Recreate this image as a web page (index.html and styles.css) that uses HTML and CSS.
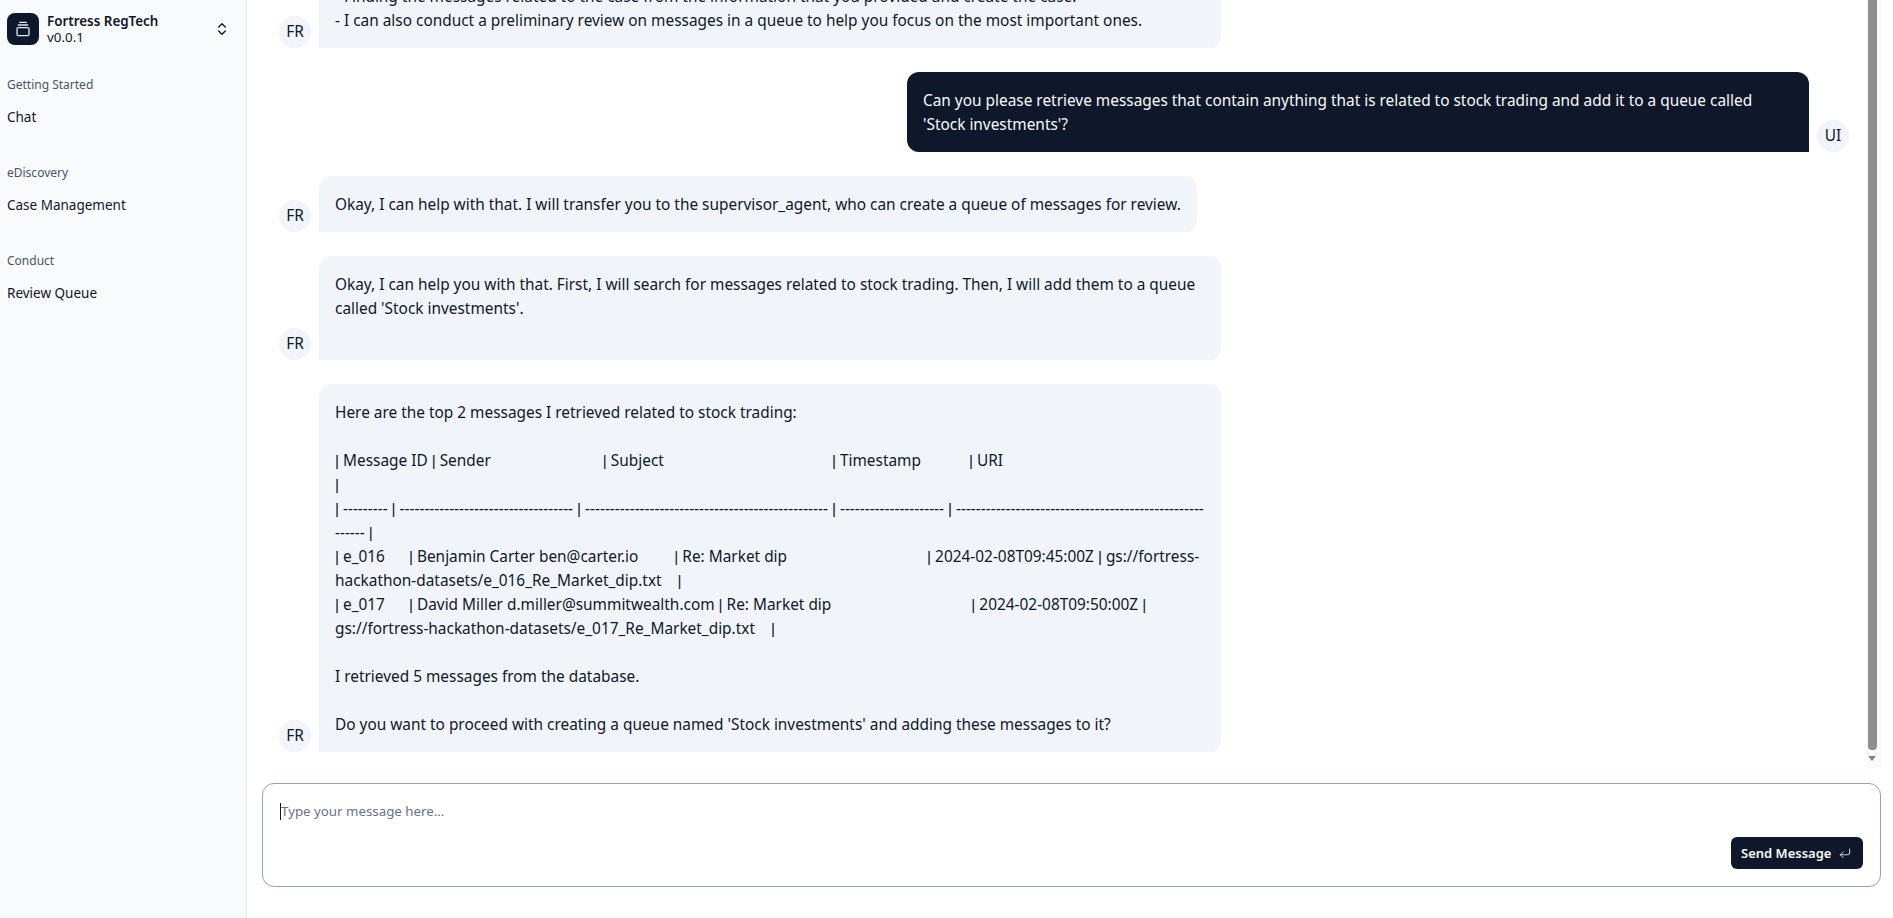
FILE: index.html
```html
<!DOCTYPE html>
<html lang="en">

<head>
    <meta charset="UTF-8">
    <title>Fortress RegTech</title>
    <link rel="stylesheet" href="styles.css">
</head>

<body>
    <div class="sidebar">
        <div class="brand">
            <div class="logo">
                <svg width="16" height="16" viewBox="0 0 24 24" fill="none" stroke="#e2e8f0" stroke-width="2" stroke-linecap="round" stroke-linejoin="round">
                    <path d="M7 2h10"></path>
                    <path d="M5 6h14"></path>
                    <rect x="3" y="10" width="18" height="12" rx="2"></rect>
                </svg>
            </div>
            <div class="brand-text">
                <b>Fortress RegTech</b>
                <span>v0.0.1</span>
            </div>
            <svg class="updown" width="16" height="16" viewBox="0 0 24 24" fill="none" stroke="#0f172a" stroke-width="2" stroke-linecap="round" stroke-linejoin="round">
                <path d="m7 15 5 5 5-5"></path>
                <path d="m7 9 5-5 5 5"></path>
            </svg>
        </div>
        <div class="group">
            <div class="group-label">Getting Started</div>
            <a class="nav" href="#">Chat</a>
        </div>
        <div class="group">
            <div class="group-label">eDiscovery</div>
            <a class="nav" href="#">Case Management</a>
        </div>
        <div class="group">
            <div class="group-label">Conduct</div>
            <a class="nav" href="#">Review Queue</a>
        </div>
    </div>

    <div class="main">
        <div class="messages">
            <div class="row">
                <div class="avatar">FR</div>
                <div class="bubble wide">
                    <div class="line">- Finding the messages related to the case from the information that you provided and create the case.</div>
                    <div class="line">- I can also conduct a preliminary review on messages in a queue to help you focus on the most important ones.</div>
                </div>
            </div>
            <div class="row mine">
                <div class="bubble">
                    <div class="line">Can you please retrieve messages that contain anything that is related to stock trading and add it to a queue called</div>
                    <div class="line">'Stock investments'?</div>
                </div>
                <div class="avatar">UI</div>
            </div>
            <div class="row">
                <div class="avatar">FR</div>
                <div class="bubble">
                    <div class="line">Okay, I can help with that. I will transfer you to the supervisor_agent, who can create a queue of messages for review.</div>
                </div>
            </div>
            <div class="row">
                <div class="avatar">FR</div>
                <div class="bubble wide">
                    <div class="line">Okay, I can help you with that. First, I will search for messages related to stock trading. Then, I will add them to a queue</div>
                    <div class="line">called 'Stock investments'.</div>
                    <div class="line"></div>
                </div>
            </div>
            <div class="row">
                <div class="avatar">FR</div>
                <div class="bubble wide">
                    <div class="line">Here are the top 2 messages I retrieved related to stock trading:</div>
                    <div class="line"></div>
                    <div class="line"><i class="pipe">|</i> Message ID <i class="pipe">|</i> Sender                            <i class="pipe">|</i> Subject                                          <i class="pipe">|</i> Timestamp            <i class="pipe">|</i> URI</div>
                    <div class="line"><i class="pipe">|</i></div>
                    <div class="line"><i class="pipe">|</i> --------- <i class="pipe">|</i> ----------------------------------- <i class="pipe">|</i> ------------------------------------------------- <i class="pipe">|</i> --------------------- <i class="pipe">|</i> --------------------------------------------------</div>
                    <div class="line">------ <i class="pipe">|</i></div>
                    <div class="line"><i class="pipe">|</i> e_016      <i class="pipe">|</i> Benjamin Carter ben@carter.io         <i class="pipe">|</i> Re: Market dip                                   <i class="pipe">|</i> 2024-02-08T09:45:00Z <i class="pipe">|</i> gs://fortress-</div>
                    <div class="line">hackathon-datasets/e_016_Re_Market_dip.txt    <i class="pipe">|</i></div>
                    <div class="line"><i class="pipe">|</i> e_017      <i class="pipe">|</i> David Miller d.miller@summitwealth.com <i class="pipe">|</i> Re: Market dip                                   <i class="pipe">|</i> 2024-02-08T09:50:00Z <i class="pipe">|</i></div>
                    <div class="line">gs://fortress-hackathon-datasets/e_017_Re_Market_dip.txt    <i class="pipe">|</i></div>
                    <div class="line"></div>
                    <div class="line">I retrieved 5 messages from the database.</div>
                    <div class="line"></div>
                    <div class="line">Do you want to proceed with creating a queue named 'Stock investments' and adding these messages to it?</div>
                </div>
            </div>
        </div>
        <div class="scrollbar">
            <div class="thumb"></div>
            <div class="arrow"></div>
        </div>
        <div class="composer">
            <div class="placeholder"><i class="caret"></i>Type your message here...</div>
            <button class="send">Send Message
                <svg width="14" height="14" viewBox="0 0 24 24" fill="none" stroke="#e2e8f0" stroke-width="1.5" stroke-linecap="round" stroke-linejoin="round">
                    <path d="M20 5v7a3 3 0 0 1-3 3H4"></path>
                    <path d="m9 10-5 5 5 5"></path>
                </svg>
            </button>
        </div>
    </div>
</body>

</html>
```

FILE: styles.css
```css
* {
    margin: 0;
    padding: 0;
    box-sizing: border-box;
}

body {
    display: flex;
    height: 918px;
    overflow: hidden;
    background-color: #fff;
    color: #0f172a;
    font-family: "Noto Sans", sans-serif;
    font-size: 15.4px;
    line-height: 24px;
}

.sidebar {
    width: 247px;
    flex-shrink: 0;
    padding: 13px 7px;
    background-color: #f8fafc;
    border-right: 1px solid #e2e8f0;
}

.brand {
    display: flex;
    align-items: center;
    height: 32px;
    margin-bottom: 24px;
}

.logo {
    width: 32px;
    height: 32px;
    display: flex;
    align-items: center;
    justify-content: center;
    border-radius: 8px;
    background-color: #0f172a;
}

.brand-text {
    flex: 1;
    margin-left: 8px;
    display: flex;
    flex-direction: column;
    font-size: 13.4px;
    line-height: 16px;
}

.brand-text b {
    font-weight: 600;
}

.updown {
    margin-right: 9px;
}

.group {
    height: 88px;
}

.group-label {
    height: 32px;
    line-height: 32px;
    font-size: 12px;
    color: #475569;
}

.nav {
    display: block;
    padding-top: 6px;
    font-size: 13.5px;
    line-height: 20px;
    color: #0f172a;
    text-decoration: none;
}

.main {
    flex: 1;
    position: relative;
    display: flex;
    flex-direction: column;
}

.messages {
    height: 752px;
    overflow: hidden;
    display: flex;
    flex-direction: column;
    justify-content: flex-end;
    gap: 24px;
    padding: 0 44px 0 32px;
}

.row {
    display: flex;
    align-items: flex-end;
    gap: 8px;
}

.row.mine {
    justify-content: flex-end;
}

.avatar {
    width: 32px;
    height: 32px;
    flex-shrink: 0;
    display: flex;
    align-items: center;
    justify-content: center;
    border-radius: 50%;
    background-color: #f1f5f9;
}

.bubble {
    max-width: 902px;
    padding: 17px 16px 15px;
    border-radius: 12px 12px 12px 0;
    background-color: #f1f5f9;
}

.bubble.wide {
    width: 902px;
}

.line {
    min-height: 24px;
    white-space: pre;
}

/* noto's bar is twice as wide as the one in the screenshot */
.pipe {
    font-family: "Liberation Sans", sans-serif;
    font-style: normal;
}

.mine .bubble {
    width: 902px;
    border-radius: 12px 12px 0 12px;
    background-color: #0f172a;
    color: #f8fafc;
}

/* drawn by hand, headless chrome hides the real one */
.scrollbar {
    position: absolute;
    top: 0;
    right: 12px;
    width: 15px;
    height: 768px;
    background-color: #fafafa;
}

.thumb {
    width: 9px;
    height: 750px;
    margin-left: 2px;
    border-radius: 0 0 4px 4px;
    background-color: #8f8f8f;
}

.arrow {
    width: 0;
    height: 0;
    margin: 6px 0 0 2px;
    border-left: 4.5px solid transparent;
    border-right: 4.5px solid transparent;
    border-top: 5px solid #808080;
}

.composer {
    height: 104px;
    margin: 31px 12px 0 15px;
    padding: 17px;
    display: flex;
    flex-direction: column;
    border: 1px solid #94a3b8;
    border-radius: 12px;
}

.placeholder {
    flex: 1;
    color: #64748b;
    font-size: 13.3px;
    line-height: 20px;
}

.caret {
    display: inline-block;
    width: 1px;
    height: 17px;
    vertical-align: text-bottom;
    background-color: #0f172a;
}

.send {
    align-self: flex-end;
    display: flex;
    align-items: center;
    gap: 7px;
    width: 132px;
    height: 32px;
    padding: 0 10px;
    border: none;
    border-radius: 6px;
    background-color: #0f172a;
    color: #f8fafc;
    font-family: inherit;
    font-size: 13px;
    font-weight: 600;
}
```
